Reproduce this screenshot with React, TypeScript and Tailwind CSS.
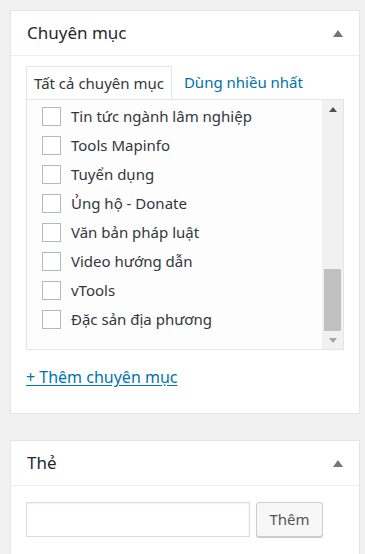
const cats = [
  "Tin tức ngành lâm nghiệp",
  "Tools Mapinfo",
  "Tuyển dụng",
  "Ủng hộ - Donate",
  "Văn bản pháp luật",
  "Video hướng dẫn",
  "vTools",
  "Đặc sản địa phương",
];

function Toggle() {
  return (
    <svg width="10" height="7" viewBox="0 0 10 7" className="fill-[#72777c]">
      <path d="M0 7 L5 0 L10 7 Z" />
    </svg>
  );
}

export default function App() {
  return (
    <div className="min-h-[554px] bg-[#f1f1f1] pt-[10px] pl-[10px] pr-[5px] font-['Noto_Sans',sans-serif] text-[#32373c]">
      <div className="w-[350px] border border-[#e5e5e5] bg-white">
        <div className="flex h-[45px] items-center justify-between border-b border-[#eeeeee] pl-[16px] pr-[16px]">
          <h2 className="text-[17px] text-[#23282d]">Chuyên mục</h2>
          <Toggle />
        </div>
        <div className="px-[15px] pt-[10px] pb-[24px]">
          <div className="flex h-[33px] items-end">
            <div className="flex h-[33px] items-center border border-b-0 border-[#e5e5e5] bg-white px-[7px] text-[15px] text-[#32373c]">
              Tất cả chuyên mục
            </div>
            <div className="flex h-[33px] items-center px-[12px] text-[15px] text-[#0073aa]">
              Dùng nhiều nhất
            </div>
          </div>
          <div className="flex h-[251px] border border-[#e5e5e5] bg-[#fdfdfd]">
            <ul className="flex-1 pl-[15px] pt-[2px]">
              {cats.map((c) => (
                <li key={c} className="flex h-[29px] items-center gap-[10px]">
                  <span className="h-[19px] w-[19px] shrink-0 border border-[#b4b9be] bg-white" />
                  <span className="text-[15px] leading-none">{c}</span>
                </li>
              ))}
            </ul>
            <div className="flex w-[21px] flex-col items-center bg-[#f1f1f1]">
              <div className="flex h-[18px] items-center">
                <svg width="8" height="5" viewBox="0 0 8 5" className="fill-[#505050]">
                  <path d="M0 5 L4 0 L8 5 Z" />
                </svg>
              </div>
              <div className="flex-1 w-full" />
              <div className="h-[62px] w-[17px] bg-[#c1c1c1]" />
              <div className="flex h-[18px] items-center">
                <svg width="8" height="5" viewBox="0 0 8 5" className="fill-[#a3a3a3]">
                  <path d="M0 0 L8 0 L4 5 Z" />
                </svg>
              </div>
            </div>
          </div>
          <div className="mt-[15px]">
            <a href="#" className="text-[16px] text-[#0073aa] underline underline-offset-2">
              + Thêm chuyên mục
            </a>
          </div>
        </div>
      </div>

      <div className="mt-[26px] w-[350px] border border-[#e5e5e5] bg-white">
        <div className="flex h-[45px] items-center justify-between border-b border-[#eeeeee] pl-[16px] pr-[16px]">
          <h2 className="text-[17px] text-[#23282d]">Thẻ</h2>
          <Toggle />
        </div>
        <div className="flex gap-[6px] px-[15px] pt-[16px] pb-[20px]">
          <input className="h-[35px] w-[224px] border border-[#dddddd] bg-white shadow-[inset_0_1px_2px_rgba(0,0,0,0.07)] outline-none" />
          <button className="h-[35px] w-[67px] rounded-[3px] border border-[#cccccc] bg-[#f7f7f7] text-[15px] text-[#555555] shadow-[0_1px_0_#cccccc]">
            Thêm
          </button>
        </div>
      </div>
    </div>
  );
}
